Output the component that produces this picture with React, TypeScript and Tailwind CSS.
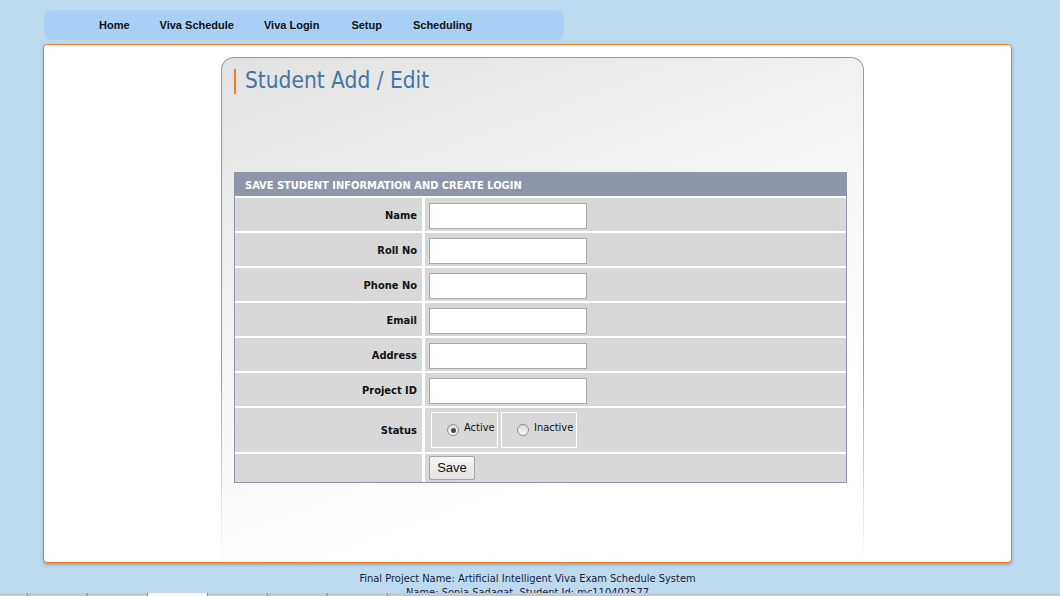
const fields = ["Name", "Roll No", "Phone No", "Email", "Address", "Project ID"];

function Radio({ checked }: { checked?: boolean }) {
  return (
    <span className="w-[12px] h-[12px] rounded-full border border-[#8f8f8f] bg-[linear-gradient(180deg,#dcdcdc,#f8f8f8)] flex items-center justify-center">
      {checked && <span className="w-[5px] h-[5px] rounded-full bg-[#4a4a4a]" />}
    </span>
  );
}

export default function App() {
  return (
    <div className="relative w-full h-[596px] overflow-hidden bg-[#bcdaee] font-['DejaVu_Sans_Condensed','Liberation_Sans',sans-serif]">
      <nav className="ml-[44px] mt-[10px] w-[520px] h-[30px] rounded-[8px] bg-[#a8d0f4] flex items-center pl-[55px] gap-[30px] font-['Liberation_Sans',sans-serif] text-[11px] font-bold text-[#111]">
        <a>Home</a>
        <a>Viva Schedule</a>
        <a>Viva Login</a>
        <a className="ml-[2px]">Setup</a>
        <a className="ml-[1px]">Scheduling</a>
      </nav>

      <div className="ml-[43px] mt-[4px] w-[969px] h-[519px] bg-white border border-[#f47b20] rounded-[4px] shadow-[0_2px_3px_rgba(0,0,0,0.25)] flex flex-col pt-[12px] pl-[177px]">
        <div className="w-[643px] flex-1 rounded-t-[13px] pt-[1px] px-[1px] bg-[linear-gradient(180deg,#9a9a9a_60%,#ffffff)]">
          <div className="h-full rounded-t-[12px] bg-[linear-gradient(160deg,#e2e2e2,#f6f6f6_45%,#ffffff_75%)] pt-[11px] px-[12px]">
            <h1 className="border-l-2 border-[#f47b20] h-[25px] pl-[9px] text-[22.5px] leading-[22px] text-[#4576a3]">
              Student Add / Edit
            </h1>

            <div className="mt-[78px] w-[613px] border border-[#8e96aa] bg-white">
              <div className="h-[23px] bg-[#8e96aa] flex items-center pl-[10px] pt-[3px] text-[11px] font-bold text-white">
                SAVE STUDENT INFORMATION AND CREATE LOGIN
              </div>
              {fields.map((f) => (
                <div key={f} className="mt-[2px] flex gap-[3px]">
                  <div className="w-[187px] h-[33px] bg-[#d8d8d8] flex items-center justify-end pr-[5px] pt-[4px] text-[11px] font-bold text-[#111]">
                    {f}
                  </div>
                  <div className="flex-1 h-[33px] bg-[#d8d8d8] flex items-start pt-[5px] pl-[4px]">
                    <input className="w-[158px] h-[26px] border border-[#a9a9a9] bg-white outline-none" />
                  </div>
                </div>
              ))}
              <div className="mt-[2px] flex gap-[3px]">
                <div className="w-[187px] h-[44px] bg-[#d8d8d8] flex items-center justify-end pr-[5px] pt-[2px] text-[11px] font-bold text-[#111]">
                  Status
                </div>
                <div className="flex-1 h-[44px] bg-[#d8d8d8] flex items-center pl-[6px] gap-[3px] text-[11px] text-[#111]">
                  <div className="w-[67px] h-[36px] border border-white flex items-center pl-[15px] gap-[5px]">
                    <Radio checked />
                    <span className="-mt-[4px]">Active</span>
                  </div>
                  <div className="w-[76px] h-[36px] border border-white flex items-center pl-[15px] gap-[5px]">
                    <Radio />
                    <span className="-mt-[4px]">Inactive</span>
                  </div>
                </div>
              </div>
              <div className="mt-[2px] flex gap-[3px]">
                <div className="w-[187px] h-[28px] bg-[#d8d8d8]" />
                <div className="flex-1 h-[28px] bg-[#d8d8d8] flex items-center pl-[4px]">
                  <button className="w-[46px] h-[24px] border border-[#a5a5a5] rounded-[2px] bg-[linear-gradient(180deg,#f6f6f6,#e3e3e3)] font-['Liberation_Sans',sans-serif] text-[13px] text-[#111]">
                    Save
                  </button>
                </div>
              </div>
            </div>
          </div>
        </div>
      </div>

      <footer className="ml-[43px] w-[969px] pt-[9px] text-center text-[11px] leading-[14px] text-[#1b1b3f]">
        <p>Final Project Name: Artificial Intelligent Viva Exam Schedule System</p>
        <p>Name: Sonia Sadaqat, Student Id: mc110402577</p>
      </footer>

      <div className="absolute bottom-0 left-0 w-full h-[3px] bg-[#c8c8c8] flex">
        <span className="w-[28px] border-r border-[#888]" />
        <span className="w-[60px] border-r border-[#888]" />
        <span className="w-[60px] border-r border-[#888]" />
        <span className="w-[60px] border-r border-[#888] bg-white" />
        <span className="w-[60px] border-r border-[#888]" />
        <span className="w-[60px] border-r border-[#888]" />
        <span className="w-[60px] border-r border-[#888]" />
      </div>
    </div>
  );
}
